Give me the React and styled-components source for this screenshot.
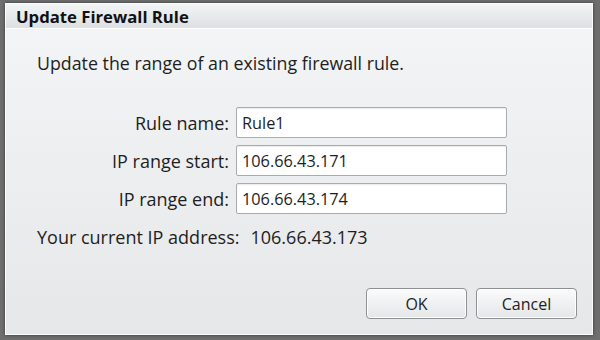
import styled, { createGlobalStyle } from 'styled-components';

const GlobalStyle = createGlobalStyle`
  html, body {
    margin: 0;
    padding: 0;
    background: #6e6e6e;
  }
  body {
    font-family: "Open Sans", "Noto Sans", sans-serif;
    color: #1e1e1e;
  }
`

const Backdrop = styled.div`
  width: 600px;
  height: 340px;
  box-sizing: border-box;
  padding: 3px 7px 5px 5px;
  display: flex;
  background: #6e6e6e;
`

const Dialog = styled.div`
  flex: 1;
  display: flex;
  flex-direction: column;
  border: 1px solid #fbfcfd;
  background: linear-gradient(#f3f5f6, #e5e7e9);
  box-shadow: 0 0 3px rgba(0, 0, 0, 0.5);
`

const TitleBar = styled.div`
  height: 24px;
  display: flex;
  align-items: center;
  padding-left: 10px;
  font-size: 16.7px;
  font-weight: bold;
  color: #111;
  background: linear-gradient(#f2f4f5, #dde0e2);
  border-bottom: 1px solid #ffffff;
`

const Body = styled.div`
  flex: 1;
  display: flex;
  flex-direction: column;
  padding: 22px 15px 15px 31px;
`

const Intro = styled.p`
  margin: 0;
  font-size: 17.8px;
  line-height: 24px;
`

const FormGrid = styled.div`
  margin-top: 32px;
  display: grid;
  grid-template-columns: 192px 271px;
  grid-auto-rows: 31px;
  column-gap: 7px;
  row-gap: 7px;
  align-items: center;
`

const Label = styled.label`
  text-align: right;
  font-size: 18px;
`

const TextInput = styled.input`
  box-sizing: border-box;
  width: 100%;
  height: 31px;
  padding: 0 5px;
  font-family: inherit;
  font-size: 16.3px;
  color: #1e1e1e;
  background: #ffffff;
  border: 1px solid #a9acae;
  border-radius: 2px;
  box-shadow: inset 0 1px 1px rgba(0, 0, 0, 0.08);
  outline: none;
`

const CurrentIp = styled.div`
  margin-top: 11px;
  display: flex;
  gap: 11px;
  font-size: 18px;
  line-height: 24px;
`

const Footer = styled.div`
  margin-top: auto;
  display: flex;
  justify-content: flex-end;
  gap: 9px;
`

const Button = styled.button`
  width: 101px;
  height: 31px;
  font-family: inherit;
  font-size: 16px;
  color: #1e1e1e;
  border: 1px solid #8e9193;
  border-radius: 4px;
  background: linear-gradient(#fbfbfb, #e4e6e8);
  box-shadow: inset 0 0 0 1px #ffffff;
  cursor: pointer;
`

const fields = [
  { label: 'Rule name:', value: 'Rule1' },
  { label: 'IP range start:', value: '106.66.43.171' },
  { label: 'IP range end:', value: '106.66.43.174' },
]

const App = () => {
  return (
    <>
      <GlobalStyle />
      <Backdrop>
        <Dialog>
          <TitleBar>Update Firewall Rule</TitleBar>
          <Body>
            <Intro>Update the range of an existing firewall rule.</Intro>
            <FormGrid>
              {fields.map((f) => (
                <>
                  <Label key={f.label + '-l'}>{f.label}</Label>
                  <TextInput key={f.label + '-i'} defaultValue={f.value} />
                </>
              ))}
            </FormGrid>
            <CurrentIp>
              <span>Your current IP address:</span>
              <span>106.66.43.173</span>
            </CurrentIp>
            <Footer>
              <Button>OK</Button>
              <Button>Cancel</Button>
            </Footer>
          </Body>
        </Dialog>
      </Backdrop>
    </>
  )
}

export default App;
